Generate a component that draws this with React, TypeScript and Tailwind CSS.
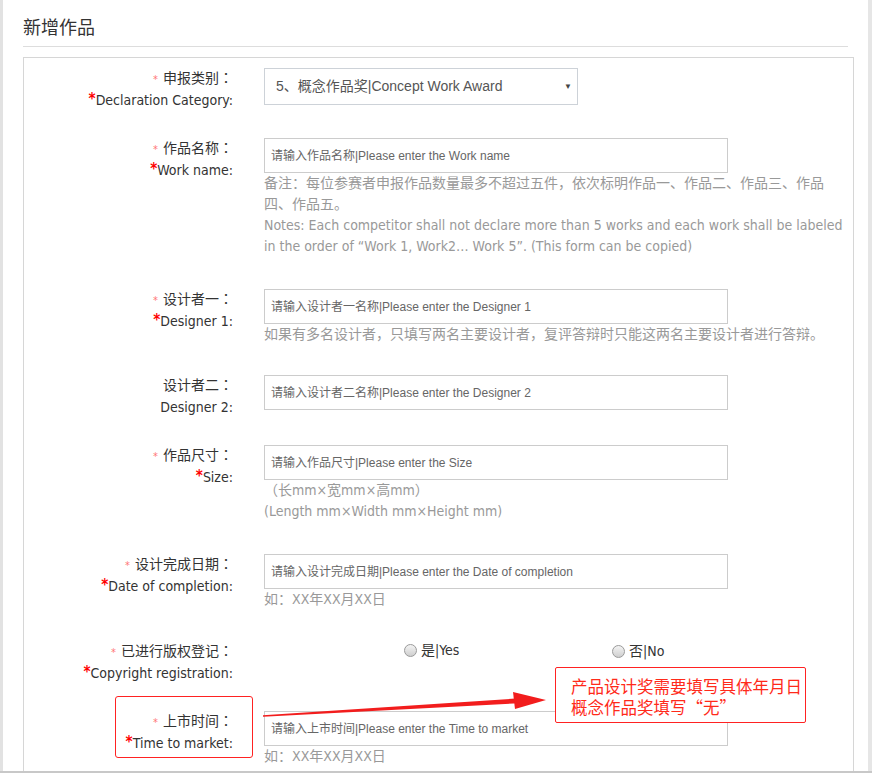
import React from "react";

// ─── Types ────────────────────────────────────────────────────────────────────

interface FieldRowProps {
  zh: string;
  en: string;
  required?: boolean;
  mb: string;
  children: React.ReactNode;
}

// ─── Pieces ───────────────────────────────────────────────────────────────────

function FieldRow({ zh, en, required = true, mb, children }: FieldRowProps) {
  return (
    <div className={`flex items-start ${mb}`}>
      <div className="w-[209px] shrink-0 text-right text-[14px] leading-[22.5px] text-[#333]">
        <div className="h-[22.5px] whitespace-nowrap">
          {required ? <span className="mr-[5px] text-[11px] leading-none text-[#f77]">*</span> : null}
          {zh}
          <span className="font-['Noto_Sans_CJK_JP',sans-serif]">：</span>
        </div>
        <div className="h-[22.5px] whitespace-nowrap">
          {required ? (
            <span className="relative top-[-1px] text-[15px] font-bold leading-none text-[#f00]">*</span>
          ) : null}
          {en}:
        </div>
      </div>
      <div className="ml-[31px] min-w-0 flex-1 pr-[5px]">{children}</div>
    </div>
  );
}

function TextInput({ placeholder }: { placeholder: string }) {
  return (
    <input
      type="text"
      placeholder={placeholder}
      className="mt-[2px] block h-[35px] w-[464px] border border-[#ccc] bg-white pl-[6px] font-['Liberation_Sans','Noto_Sans_CJK_SC',sans-serif] text-[12px] text-[#555] outline-none placeholder:text-[#666]"
    />
  );
}

function Help({ children }: { children: React.ReactNode }) {
  return <div className="text-[14px] leading-[21px] text-[#999]">{children}</div>;
}

function Radio({ label }: { label: string }) {
  return (
    <span className="inline-flex items-center">
      <span className="mr-[4px] inline-block h-[13px] w-[13px] rounded-full border border-[#9a9a9a] bg-gradient-to-b from-[#f4f4f4] to-[#cfcfcf]" />
      <span className="text-[14px] text-[#333]">{label}</span>
    </span>
  );
}

// ─── Page ─────────────────────────────────────────────────────────────────────

export default function App() {
  return (
    <div className="relative h-[773px] w-[872px] overflow-hidden border-b-[2px] border-[#c8c8c8] bg-white font-['DejaVu_Sans_Condensed','DejaVu_Sans','Noto_Sans_CJK_SC',sans-serif]">
      <div className="flex h-full">
        <div className="w-[3px] shrink-0 bg-[#e2e2e2]" />

        <div className="min-w-0 flex-1 pl-[20px] pr-[14px]">
          {/* Heading */}
          <div className="mr-[6px] border-b border-[#ddd] pb-[7px] pt-[13px] font-['Noto_Sans_CJK_SC',sans-serif] text-[18px] leading-[26px] text-[#333]">
            新增作品
          </div>

          {/* Form panel */}
          <div className="mt-[10px] h-[800px] border border-[#d6d6d6] pt-[8px]">
            <FieldRow zh="申报类别" en="Declaration Category" mb="mb-[25px]">
              <div className="mt-[2px] flex h-[37px] w-[314px] items-center justify-between border border-[#cdd2d8] pl-[11px] pr-[5px] font-['Liberation_Sans','Noto_Sans_CJK_SC',sans-serif] text-[14px] text-[#555]">
                <span>5、概念作品奖|Concept Work Award</span>
                <span className="text-[8px] text-[#444]">▼</span>
              </div>
            </FieldRow>

            <FieldRow zh="作品名称" en="Work name" mb="mb-[30px]">
              <TextInput placeholder="请输入作品名称|Please enter the Work name" />
              <Help>
                备注：每位参赛者申报作品数量最多不超过五件，依次标明作品一、作品二、作品三、作品四、作品五。
                <br />
                Notes: Each competitor shall not declare more than 5 works and each work shall be labeled in the order of “Work 1, Work2… Work 5”. (This form can be copied)
              </Help>
            </FieldRow>

            <FieldRow zh="设计者一" en="Designer 1" mb="mb-[28px]">
              <TextInput placeholder="请输入设计者一名称|Please enter the Designer 1" />
              <Help>如果有多名设计者，只填写两名主要设计者，复评答辩时只能这两名主要设计者进行答辩。</Help>
            </FieldRow>

            <FieldRow zh="设计者二" en="Designer 2" required={false} mb="mb-[25px]">
              <TextInput placeholder="请输入设计者二名称|Please enter the Designer 2" />
            </FieldRow>

            <FieldRow zh="作品尺寸" en="Size" mb="mb-[30px]">
              <TextInput placeholder="请输入作品尺寸|Please enter the Size" />
              <Help>
                （长mm×宽mm×高mm）
                <br />
                (Length mm×Width mm×Height mm)
              </Help>
            </FieldRow>

            <FieldRow zh="设计完成日期" en="Date of completion" mb="mb-[29px]">
              <TextInput placeholder="请输入设计完成日期|Please enter the Date of completion" />
              <Help>如：XX年XX月XX日</Help>
            </FieldRow>

            <FieldRow zh="已进行版权登记" en="Copyright registration" mb="mb-[25px]">
              <div className="flex h-[22.5px] items-center pl-[140px] pt-[3px]">
                <div className="w-[208px]">
                  <Radio label="是|Yes" />
                </div>
                <Radio label="否|No" />
              </div>
            </FieldRow>

            <FieldRow zh="上市时间" en="Time to market" mb="mb-[25px]">
              <TextInput placeholder="请输入上市时间|Please enter the Time to market" />
              <Help>如：XX年XX月XX日</Help>
            </FieldRow>
          </div>
        </div>

        <div className="w-[4px] shrink-0 bg-[#e6e6e6]" />
      </div>

      {/* Annotation: box round the label */}
      <div className="absolute left-[115px] top-[696px] h-[62px] w-[138px] rounded-[3px] border border-[#f22]" />

      {/* Annotation: arrow */}
      <svg className="absolute left-0 top-0" width="872" height="773" viewBox="0 0 872 773">
        <polygon points="263,715.3 263,716.7 520,703.2 519,698.3" fill="#f21d1d" />
        <polygon points="513,692 546,700 515,709" fill="#f21d1d" />
      </svg>

      {/* Annotation: note box */}
      <div className="absolute left-[555px] top-[667px] h-[56px] w-[251px] rounded-[2px] border border-[#f22] bg-white pl-[15px] pt-[8px] font-['Noto_Sans_CJK_SC',sans-serif] text-[16.5px] leading-[21px] text-[#ff2a1a]">
        <div>产品设计奖需要填写具体年月日</div>
        <div>概念作品奖填写“无”</div>
      </div>
    </div>
  );
}
